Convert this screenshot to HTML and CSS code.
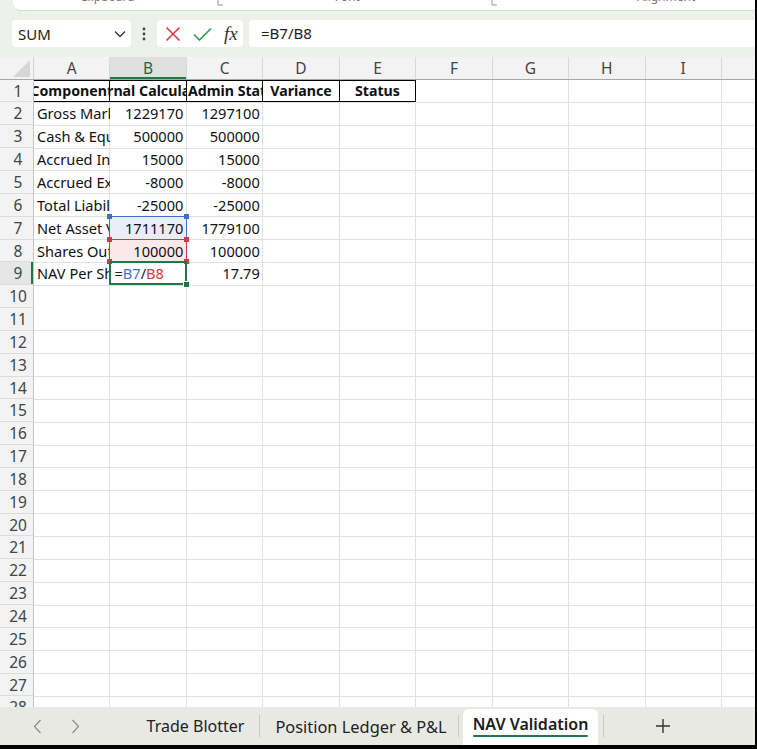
FILE: index.html
```html
<!DOCTYPE html>
<html>
<head>
<meta charset="utf-8">
<link rel="stylesheet" href="styles.css">
</head>
<body>
<div class="screen">
  <div class="ribbon">
    <span class="rl rl-clip">Clipboard</span>
    <svg class="launch l1" width="6" height="6" viewBox="0 0 6 6"><path d="M1 0v5h5" fill="none" stroke="#999" stroke-width="1"/></svg>
    <span class="rl rl-font">Font</span>
    <svg class="launch l2" width="6" height="6" viewBox="0 0 6 6"><path d="M1 0v5h5" fill="none" stroke="#999" stroke-width="1"/></svg>
    <span class="rl rl-align">Alignment</span>
  </div>

  <div class="fbar">
    <div class="namebox">
      <span>SUM</span>
      <svg width="12" height="8" viewBox="0 0 12 8"><path d="M1 1.5l5 5 5-5" fill="none" stroke="#333" stroke-width="1.3"/></svg>
    </div>
    <div class="dots">
      <svg width="4" height="14" viewBox="0 0 4 14"><circle cx="2" cy="2" r="1.4" fill="#444"/><circle cx="2" cy="7" r="1.4" fill="#444"/><circle cx="2" cy="12" r="1.4" fill="#444"/></svg>
    </div>
    <div class="iconbox">
      <svg class="ic-x" width="16" height="16" viewBox="0 0 16 16"><path d="M1.5 1.5l13 13M14.5 1.5l-13 13" stroke="#d9393f" stroke-width="1.6" fill="none"/></svg>
      <svg class="ic-ok" width="19" height="14" viewBox="0 0 19 14"><path d="M1 7.5l5.5 5.5L18 1.5" stroke="#2e9a52" stroke-width="1.6" fill="none"/></svg>
      <span class="fx">fx</span>
    </div>
    <div class="formula">=B7/B8</div>
  </div>

  <div class="sheet">
    <div class="colhdr">
      <div class="corner"><svg width="17" height="17" viewBox="0 0 17 17"><path d="M17 0V17H0Z" fill="#d6d6d6"/></svg></div>
      <div class="ch">A</div>
      <div class="ch sel">B</div>
      <div class="ch">C</div>
      <div class="ch">D</div>
      <div class="ch">E</div>
      <div class="ch">F</div>
      <div class="ch">G</div>
      <div class="ch">H</div>
      <div class="ch">I</div>
      <div class="ch last"></div>
    </div>
    <div class="body">
      <div class="rows">
        <div class="rn">1</div><div class="rn">2</div><div class="rn">3</div><div class="rn">4</div>
        <div class="rn">5</div><div class="rn">6</div><div class="rn">7</div><div class="rn">8</div>
        <div class="rn rsel">9</div><div class="rn">10</div><div class="rn">11</div><div class="rn">12</div>
        <div class="rn">13</div><div class="rn">14</div><div class="rn">15</div><div class="rn">16</div>
        <div class="rn">17</div><div class="rn">18</div><div class="rn">19</div><div class="rn">20</div>
        <div class="rn">21</div><div class="rn">22</div><div class="rn">23</div><div class="rn">24</div>
        <div class="rn">25</div><div class="rn">26</div><div class="rn">27</div><div class="rn">28</div>
      </div>
      <div class="cells">
        <div class="row">
          <div class="c hd ctr">Component</div>
          <div class="c hd ctr">Internal Calculation</div>
          <div class="c hd lft">Admin Statement</div>
          <div class="c hd ctr">Variance</div>
          <div class="c hd ctr">Status</div>
        </div>
        <div class="row"><div class="c">Gross Market Value</div><div class="c num">1229170</div><div class="c num">1297100</div></div>
        <div class="row"><div class="c">Cash &amp; Equivalents</div><div class="c num">500000</div><div class="c num">500000</div></div>
        <div class="row"><div class="c">Accrued Income</div><div class="c num">15000</div><div class="c num">15000</div></div>
        <div class="row"><div class="c">Accrued Expenses</div><div class="c num">-8000</div><div class="c num">-8000</div></div>
        <div class="row"><div class="c">Total Liabilities</div><div class="c num">-25000</div><div class="c num">-25000</div></div>
        <div class="row"><div class="c">Net Asset Value</div><div class="c num ref-blue">1711170<i class="h tl"></i><i class="h tr"></i><i class="h bl"></i><i class="h br"></i></div><div class="c num">1779100</div></div>
        <div class="row"><div class="c">Shares Outstanding</div><div class="c num ref-red">100000<i class="h tl"></i><i class="h tr"></i><i class="h bl"></i><i class="h br"></i></div><div class="c num">100000</div></div>
        <div class="row"><div class="c">NAV Per Share</div><div class="c active">=<span class="b7">B7</span>/<span class="b8">B8</span><i class="fill"></i></div><div class="c num">17.79</div></div>
      </div>
    </div>
  </div>

  <div class="tabs">
    <div class="nav">
      <svg width="9" height="15" viewBox="0 0 9 15"><path d="M7.5 1L1.5 7.5l6 6.5" fill="none" stroke="#8a8a8a" stroke-width="1.2"/></svg>
      <svg width="9" height="15" viewBox="0 0 9 15"><path d="M1.5 1l6 6.5-6 6.5" fill="none" stroke="#8a8a8a" stroke-width="1.2"/></svg>
    </div>
    <div class="tab t1">Trade Blotter</div>
    <div class="sep"></div>
    <div class="tab t2">Position Ledger &amp; P&amp;L</div>
    <div class="sep"></div>
    <div class="tab tact">NAV Validation</div>
    <div class="sep s3"></div>
    <div class="plus">
      <svg width="16" height="16" viewBox="0 0 16 16"><path d="M8 1v14M1 8h14" stroke="#333" stroke-width="1.4"/></svg>
    </div>
  </div>
</div>
</body>
</html>
```
FILE: styles.css
```css
body {
  margin: 0;
  background: #000;
}

.screen {
  width: 755px;
  height: 745px;
  background: #eef0ec;
  overflow: hidden;
  display: flex;
  flex-direction: column;
  font-family: "Noto Sans", "Open Sans", sans-serif;
}

/* ribbon remnant */
.ribbon {
  flex: none;
  height: 10px;
  margin-left: 13px;
  background: #fff;
  border-bottom: 1px solid #d5dad3;
  border-bottom-left-radius: 8px;
  display: flex;
  align-items: flex-start;
  overflow: hidden;
}
.rl {
  font-size: 12px;
  line-height: 12px;
  color: #777;
  margin-top: -9px;
  white-space: nowrap;
}
.rl-clip { margin-left: 67px; }
.launch { margin-top: 0; }
.l1 { margin-left: 82px; }
.rl-font { margin-left: 112px; }
.l2 { margin-left: 131px; }
.rl-align { margin-left: 140px; }

/* formula bar */
.fbar {
  flex: none;
  height: 27px;
  margin-top: 9px;
  margin-bottom: 10px;
  display: flex;
  align-items: center;
}
.namebox {
  margin-left: 12px;
  width: 119px;
  height: 27px;
  box-sizing: border-box;
  background: #fff;
  border-radius: 4px;
  display: flex;
  align-items: center;
  justify-content: space-between;
  padding: 0 5px 0 6px;
  font-size: 15px;
  color: #222;
}
.dots {
  width: 26px;
  display: flex;
  justify-content: center;
}
.iconbox {
  width: 86px;
  height: 27px;
  box-sizing: border-box;
  background: #fff;
  border-radius: 4px;
  display: flex;
  align-items: center;
  padding-left: 8px;
}
.ic-ok { margin-left: 12px; }
.fx {
  margin-left: 12px;
  font-family: "Liberation Serif", "DejaVu Serif", serif;
  font-style: italic;
  font-size: 19px;
  color: #333;
  line-height: 20px;
}
.formula {
  margin-left: 6px;
  flex: 1;
  height: 27px;
  box-sizing: border-box;
  background: #fff;
  border-radius: 4px 0 0 4px;
  padding-left: 12px;
  font-size: 15px;
  line-height: 27px;
  color: #222;
}

/* sheet */
.sheet {
  flex: none;
  height: 650px;
  background: #fff;
  overflow: hidden;
  display: flex;
  flex-direction: column;
}
.colhdr {
  flex: none;
  height: 22.6px;
  box-sizing: border-box;
  display: grid;
  grid-template-columns: 34px repeat(9, 76.44px) 1fr;
  background: #f3f3f3;
  border-bottom: 1px solid #a8a8a8;
}
.corner {
  border-right: 1px solid #d4d4d4;
  display: flex;
  align-items: flex-end;
  justify-content: flex-end;
  padding: 0 3px 2px 0;
}
.ch {
  border-right: 1px solid #d8d8d8;
  text-align: center;
  font-size: 15.5px;
  line-height: 22px;
  color: #444;
}
.ch.sel {
  background: #e0e0e0;
  color: #1a6b3c;
  box-shadow: inset 0 -2px 0 #1d7a45;
}
.ch.last { border-right: none; }

.body {
  flex: 1;
  display: flex;
  min-height: 0;
}
.rows {
  flex: none;
  width: 34px;
  box-sizing: border-box;
  background: #f3f3f3;
  border-right: 1px solid #c4c4c4;
}
.rn {
  height: 22.85px;
  box-sizing: border-box;
  border-bottom: 1px solid #dcdcdc;
  font-size: 15.5px;
  line-height: 22px;
  color: #444;
  text-align: center;
  padding-left: 3px;
}
.rn.rsel {
  background: #e6e6e6;
  box-shadow: inset -2px 0 0 #1d7a45;
}

.cells {
  flex: 1;
  background-color: #fff;
  background-image:
    repeating-linear-gradient(to right, transparent 0, transparent 75.44px, #e1e1e1 75.44px, #e1e1e1 76.44px),
    repeating-linear-gradient(to bottom, transparent 0, transparent 21.85px, #e1e1e1 21.85px, #e1e1e1 22.85px);
}
.row {
  display: flex;
  height: 22.85px;
}
.c {
  flex: none;
  width: 76.44px;
  height: 22.85px;
  box-sizing: border-box;
  padding: 0 4px 0 3px;
  font-family: "Noto Sans", "Liberation Sans", sans-serif;
  font-size: 14.6px;
  line-height: 23px;
  color: #111;
  white-space: nowrap;
  overflow: hidden;
  position: relative;
}
.c.num {
  text-align: right;
  padding-right: 3.5px;
}
.c.hd {
  font-weight: bold;
  font-size: 14.2px;
  border-right: 1px solid #000;
  border-bottom: 1px solid #000;
  border-top: 1px solid #000;
  line-height: 20px;
  padding: 0;
}
.c.ctr {
  display: flex;
  justify-content: center;
}
.c.lft { padding-left: 1px; }

.ref-blue {
  background: #e8eef9;
  overflow: visible;
}
.ref-blue::after,
.ref-red::after {
  content: "";
  position: absolute;
  left: -1px;
  top: -1px;
  right: 0;
  bottom: 0;
  border: 1px solid #3f6fc6;
}
.ref-red {
  background: #fbe8e9;
  overflow: visible;
}
.ref-red::after { border-color: #cf3a44; }

.h {
  position: absolute;
  width: 5px;
  height: 5px;
  z-index: 2;
  background: #3f6fc6;
}
.ref-red .h { background: #cf3a44; }
.h.tl { left: -3px; top: -3px; }
.h.tr { right: -2px; top: -3px; }
.h.bl { left: -3px; bottom: -2px; }
.h.br { right: -2px; bottom: -2px; }

.active {
  overflow: visible;
  padding-left: 4px;
  color: #222;
}
.active::after {
  content: "";
  position: absolute;
  left: -1px;
  top: -1px;
  right: 0;
  bottom: 0;
  border: 2px solid #1d7a45;
  z-index: 3;
}
.active .fill {
  position: absolute;
  right: -3px;
  bottom: -3px;
  width: 5px;
  height: 5px;
  background: #1d7a45;
  border: 1px solid #fff;
  z-index: 4;
}
.b7 { color: #3f6fc6; }
.b8 { color: #cf3a44; }

/* sheet tabs */
.tabs {
  flex: none;
  height: 38px;
  background: #e9e9e4;
  display: flex;
  align-items: stretch;
}
.nav {
  width: 132px;
  box-sizing: border-box;
  padding-left: 33px;
  display: flex;
  align-items: center;
  gap: 29px;
}
.tab {
  display: flex;
  align-items: center;
  justify-content: center;
  font-size: 16px;
  color: #222;
  white-space: nowrap;
}
.t1 { width: 127px; }
.t2 { width: 198px; padding-left: 4px; box-sizing: border-box; font-size: 16.4px; }
.sep {
  width: 1px;
  height: 22px;
  align-self: center;
  background: #cacac4;
}
.tact {
  margin-left: 4px;
  margin-top: 2px;
  width: 135px;
  box-sizing: border-box;
  padding-bottom: 7px;
  background: #fff;
  border-radius: 6px 6px 0 0;
  font-weight: 600;
  color: #1b1b1b;
  position: relative;
}
.tact::after {
  content: "";
  position: absolute;
  left: 10px;
  right: 10px;
  bottom: 8px;
  height: 2px;
  border-radius: 1px;
  background: #1d7a45;
}
.s3 { margin-left: 5px; }
.plus {
  width: 118px;
  display: flex;
  align-items: center;
  justify-content: center;
}
```
